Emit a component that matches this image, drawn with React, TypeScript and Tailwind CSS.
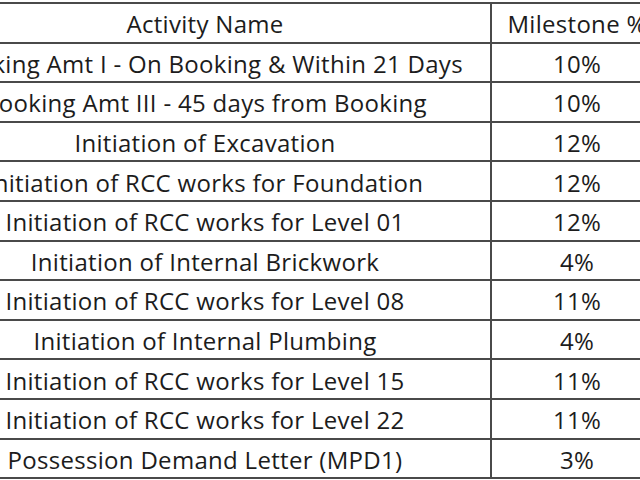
const rows: [string, string][] = [
  ["Booking Amt I - On Booking & Within 21 Days", "10%"],
  ["Booking Amt III - 45 days from Booking", "10%"],
  ["Initiation of Excavation", "12%"],
  ["Initiation of RCC works for Foundation", "12%"],
  ["Initiation of RCC works for Level 01", "12%"],
  ["Initiation of Internal Brickwork", "4%"],
  ["Initiation of RCC works for Level 08", "11%"],
  ["Initiation of Internal Plumbing", "4%"],
  ["Initiation of RCC works for Level 15", "11%"],
  ["Initiation of RCC works for Level 22", "11%"],
  ["Possession Demand Letter (MPD1)", "3%"],
];

function Row({ a, b }: { a: string; b: string }) {
  return (
    <div className="flex h-[39.6px] border-t-2 border-[#4a4a4a]">
      <div className="w-[572px] shrink-0 flex items-center justify-center pt-[3px] border-r-2 border-[#4a4a4a] whitespace-nowrap">
        {a}
      </div>
      <div className="w-[170px] shrink-0 flex items-center justify-center pt-[3px] whitespace-nowrap">{b}</div>
    </div>
  );
}

export default function App() {
  return (
    <div
      className="w-[640px] h-[480px] overflow-hidden bg-white text-[#1c1c1c] pt-[2px]"
      style={{ fontFamily: '"Open Sans", sans-serif' }}
    >
      <div className="ml-[-80px] w-[742px] text-[24px] tracking-[0.3px] leading-none border-b-2 border-[#4a4a4a]">
        <Row a="Activity Name" b="Milestone %" />
        {rows.map(([a, b]) => (
          <Row key={a} a={a} b={b} />
        ))}
      </div>
    </div>
  );
}
